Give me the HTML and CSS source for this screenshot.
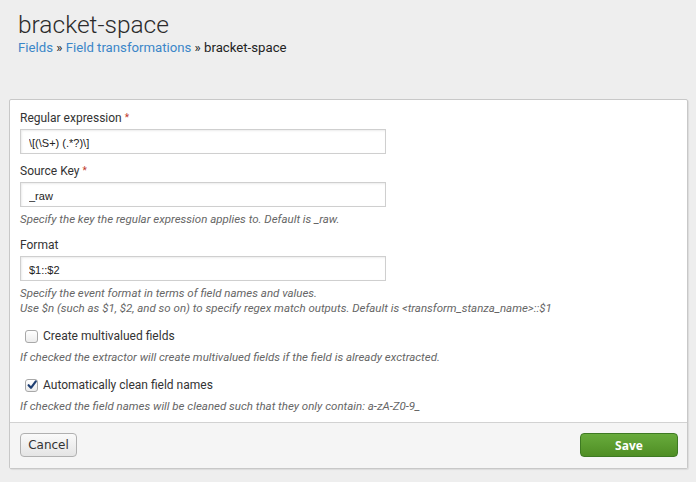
FILE: index.html
```html
<!DOCTYPE html>
<html>
<head>
<meta charset="utf-8">
<link rel="stylesheet" href="styles.css">
</head>
<body>
<header class="page-header">
  <h1 class="title">bracket-space</h1>
  <div class="crumbs"><a href="#">Fields</a> » <a href="#">Field transformations</a> » bracket-space</div>
</header>
<form class="panel">
  <div class="panel-body">
    <div class="field">
      <label class="label">Regular expression <span class="req">*</span></label>
      <input class="text" type="text" value="\[(\S+) (.*?)\]">
    </div>
    <div class="field">
      <label class="label">Source Key <span class="req">*</span></label>
      <input class="text" type="text" value="_raw">
      <p class="help">Specify the key the regular expression applies to. Default is _raw.</p>
    </div>
    <div class="field">
      <label class="label">Format</label>
      <input class="text" type="text" value="$1::$2">
      <p class="help">Specify the event format in terms of field names and values.<br>Use $n (such as $1, $2, and so on) to specify regex match outputs. Default is &lt;transform_stanza_name&gt;::$1</p>
    </div>
    <div class="check-field">
      <label class="check"><span class="box"></span>Create multivalued fields</label>
      <p class="help">If checked the extractor will create multivalued fields if the field is already exctracted.</p>
    </div>
    <div class="check-field">
      <label class="check"><span class="box checked"><svg viewBox="0 0 12 12" width="12" height="12"><path d="M2.6 6.2 L5 8.8 L9.8 2.4" fill="none" stroke="#1f3f73" stroke-width="2.2" stroke-linecap="round" stroke-linejoin="round"/></svg></span>Automatically clean field names</label>
      <p class="help">If checked the field names will be cleaned such that they only contain: a-zA-Z0-9_</p>
    </div>
  </div>
  <div class="panel-footer">
    <button type="button" class="btn btn-cancel">Cancel</button>
    <button type="button" class="btn btn-save">Save</button>
  </div>
</form>
</body>
</html>
```
FILE: styles.css
```css
html, body {
  margin: 0;
  padding: 0;
  background: #eeeeee;
}
body {
  font-family: Roboto, "Liberation Sans", sans-serif;
  color: #333;
  width: 696px;
  height: 482px;
  overflow: hidden;
}
.page-header {
  padding: 11px 0 0 18px;
  height: 99px;
  box-sizing: border-box;
}
.title {
  margin: 0;
  font-weight: 300;
  font-size: 24.5px;
  line-height: 28px;
  color: #2b2b2b;
}
.crumbs {
  font-size: 13.2px;
  line-height: 18px;
  color: #222;
}
.crumbs a {
  color: #3b86c8;
  text-decoration: none;
}
.panel {
  margin: 0 8px 0 9px;
  background: #fff;
  border: 1px solid #c8c8c8;
  border-radius: 2px;
  box-shadow: 1px 1px 1px rgba(0,0,0,0.08);
}
.panel-body {
  padding: 9px 10px 8px 10px;
}
.field {
  margin-bottom: 8px;
}
.field:has(.help) {
  margin-bottom: 10px;
}
.label {
  display: block;
  font-size: 12px;
  line-height: 17px;
  color: #333;
  margin-bottom: 2px;
}
.req {
  color: #c0392b;
  font-size: 10px;
  vertical-align: 1px;
}
.text {
  display: block;
  box-sizing: border-box;
  width: 366px;
  height: 25px;
  margin: 0;
  padding: 2px 8px 0;
  border: 1px solid #cfcfcf;
  box-shadow: inset 1px 1px 2px rgba(0,0,0,0.08);
  font-family: "Liberation Sans", Arial, sans-serif;
  font-size: 11px;
  color: #222;
  background: #fff;
}
.help {
  margin: 5px 0 0;
  font-size: 11.5px;
  line-height: 15px;
  font-style: italic;
  color: #666;
}
.check-field {
  margin-top: 10px;
}
.field + .check-field {
  margin-top: 1px;
}
.check {
  display: flex;
  align-items: center;
  gap: 5px;
  padding-left: 5px;
  font-size: 12px;
  line-height: 20px;
  color: #333;
}
.box {
  width: 11px;
  height: 11px;
  border: 1px solid #a8a8a8;
  border-radius: 3px;
  background: linear-gradient(#ffffff, #ececec);
  position: relative;
}
.box svg {
  position: absolute;
  left: 0;
  top: -1px;
}
.check-field .help {
  margin-top: 4px;
}
.panel-footer {
  display: flex;
  justify-content: space-between;
  align-items: center;
  background: #f5f5f5;
  border-top: 1px solid #d2d2d2;
  padding: 10px 9px 11px 10px;
}
.btn {
  height: 24px;
  border-radius: 4px;
  font-size: 13px;
  cursor: pointer;
}
.btn-cancel {
  width: 57px;
  border: 1px solid #b0b0b0;
  background: linear-gradient(#fafafa, #e4e4e4);
  font-family: "DejaVu Sans", "Liberation Sans", sans-serif;
  font-size: 12px;
  color: #333;
}
.btn-save {
  width: 98px;
  border: 1px solid #3e7a23;
  background: linear-gradient(#68ab3c, #4f8e24);
  color: #fff;
  font-family: "Open Sans", "DejaVu Sans", sans-serif;
  font-weight: 700;
  font-size: 12px;
}
```
